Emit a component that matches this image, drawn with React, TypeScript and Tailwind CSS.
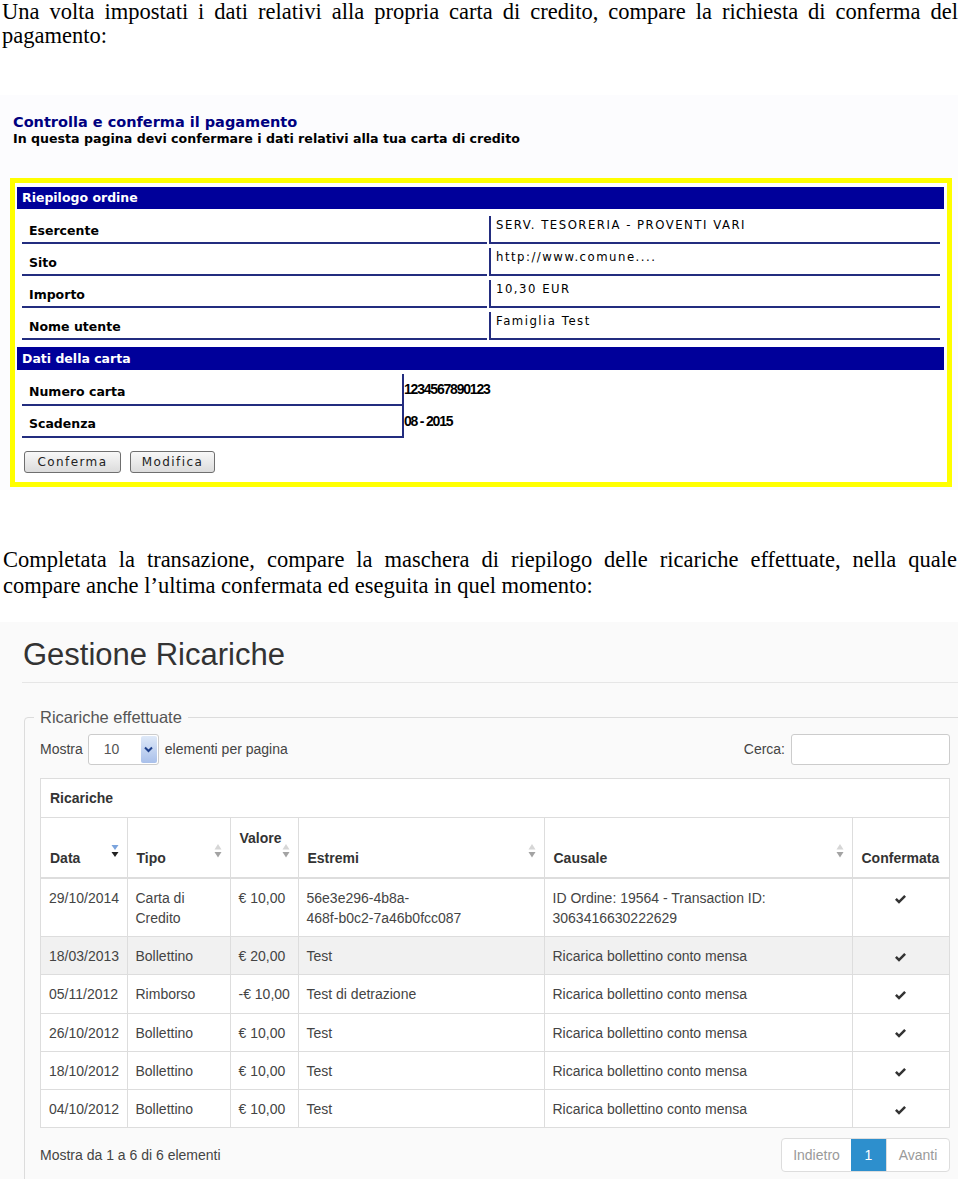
import React from 'react';

const NAVY_LINE = 'border-[#232d7f]';

const SortIcon = ({ active }: { active?: boolean }) => (
  <svg width="8" height="16" viewBox="0 0 8 16" className="absolute right-[8px] top-[25px]">
    {active ? (
      <>
        <path d="M0.5 2 L7.5 2 L4 7 Z" fill="#7aa3dd" />
        <path d="M0.5 9 L7.5 9 L4 14 Z" fill="#222" />
      </>
    ) : (
      <>
        <path d="M4 1 L7.5 6.5 L0.5 6.5 Z" fill="#d6d6d6" />
        <path d="M0.5 9 L7.5 9 L4 14.5 Z" fill="#a3a3a3" />
      </>
    )}
  </svg>
);

const Check = () => (
  <svg width="13" height="11" viewBox="0 0 13 11" className="inline-block">
    <path d="M1 5.8 L2.8 4 L5 6.2 L10.2 1 L12 2.8 L5 9.8 Z" fill="#333" />
  </svg>
);

const orderRows: [string, string][] = [
  ['Esercente', 'SERV. TESORERIA - PROVENTI VARI'],
  ['Sito', 'http://www.comune....'],
  ['Importo', '10,30 EUR'],
  ['Nome utente', 'Famiglia Test'],
];

const cardRows: [string, string][] = [
  ['Numero carta', '1234567890123'],
  ['Scadenza', '08 - 2015'],
];

type Row = {
  data: string;
  tipo: React.ReactNode;
  valore: string;
  estremi: React.ReactNode;
  causale: React.ReactNode;
  hover?: boolean;
};

const rows: Row[] = [
  {
    data: '29/10/2014',
    tipo: 'Carta di Credito',
    valore: '€ 10,00',
    estremi: (
      <>
        56e3e296-4b8a-
        <br />
        468f-b0c2-7a46b0fcc087
      </>
    ),
    causale: (
      <>
        ID Ordine: 19564 - Transaction ID:
        <br />
        3063416630222629
      </>
    ),
  },
  { data: '18/03/2013', tipo: 'Bollettino', valore: '€ 20,00', estremi: 'Test', causale: 'Ricarica bollettino conto mensa', hover: true },
  { data: '05/11/2012', tipo: 'Rimborso', valore: '-€ 10,00', estremi: 'Test di detrazione', causale: 'Ricarica bollettino conto mensa' },
  { data: '26/10/2012', tipo: 'Bollettino', valore: '€ 10,00', estremi: 'Test', causale: 'Ricarica bollettino conto mensa' },
  { data: '18/10/2012', tipo: 'Bollettino', valore: '€ 10,00', estremi: 'Test', causale: 'Ricarica bollettino conto mensa' },
  { data: '04/10/2012', tipo: 'Bollettino', valore: '€ 10,00', estremi: 'Test', causale: 'Ricarica bollettino conto mensa' },
];

export default function App() {
  const td = 'border-l border-[#dddddd] first:border-l-0 px-[8px] pt-[9px] pb-[8.2px] align-top';
  const th = 'relative border-l border-[#dddddd] first:border-l-0 pl-[9px] pr-[20px] pb-[9px] align-bottom text-left font-bold text-[#333] h-[60px]';
  return (
    <div className="w-[960px] bg-white text-black">
      <p className="px-[2px] font-['Liberation_Serif',serif] text-[22.5px] leading-[24px] text-justify">
        Una volta impostati i dati relativi alla propria carta di credito, compare la richiesta di conferma del pagamento:
      </p>

      {/* Screenshot 1 */}
      <div className="mt-[47px] h-[395px] w-[958px] bg-[#fcfcfe] pt-[18px] font-['DejaVu_Sans',sans-serif]">
        <div className="pl-[13px] text-[14.5px] leading-[18px] font-bold text-[#000080]">Controlla e conferma il pagamento</div>
        <div className="pl-[13px] text-[12.6px] leading-[16px] font-bold text-black">
          In questa pagina devi confermare i dati relativi alla tua carta di credito
        </div>
        <div className="mt-[31px] ml-[10px] flex h-[309px] w-[942px] flex-col border-[5px] border-[#ffff00] bg-white pt-[4px] pl-[2px] pr-[3px]">
          <div className="h-[22px] bg-[#00009a] pl-[5px] text-[12.5px] leading-[22px] font-bold text-white">Riepilogo ordine</div>
          <div className="mt-[3px] flex flex-col">
            {orderRows.map(([l, v]) => (
              <div key={l} className="flex h-[32px]">
                <div className={`ml-[5px] flex w-[465px] items-end border-b-2 ${NAVY_LINE} pb-[4px] pl-[7px] text-[12.5px] leading-[14px] font-bold text-black`}>
                  {l}
                </div>
                <div className={`mt-[4px] ml-[2px] w-[451px] border-l-2 border-b-2 ${NAVY_LINE} pt-[2px] pl-[5px] text-[11.7px] leading-[14px] tracking-[1.5px] text-black`}>
                  {v}
                </div>
              </div>
            ))}
          </div>
          <div className="mt-[7px] h-[23px] bg-[#00009a] pl-[5px] text-[12.5px] leading-[23px] font-bold text-white">Dati della carta</div>
          <div className="mt-[4px] flex flex-col">
            {cardRows.map(([l, v]) => (
              <div key={l} className="flex h-[32px]">
                <div className={`ml-[5px] flex w-[382px] items-end border-b-2 border-r-2 ${NAVY_LINE} pb-[5px] pl-[7px] text-[12.5px] leading-[14px] font-bold text-black`}>
                  {l}
                </div>
                <div className="pt-[8px] font-['Liberation_Sans',sans-serif] text-[14px] leading-[15px] font-bold tracking-[-1.2px] text-black">
                  {v}
                </div>
              </div>
            ))}
          </div>
          <div className="mt-[13px] ml-[7px] flex gap-[9px]">
            <button className="h-[22px] w-[97px] rounded-[3px] border border-[#6f6f6f] bg-gradient-to-b from-[#f8f8f8] to-[#dcdcdc] text-[12px] leading-[20px] tracking-[1.4px] text-[#222]">
              Conferma
            </button>
            <button className="h-[22px] w-[85px] rounded-[3px] border border-[#6f6f6f] bg-gradient-to-b from-[#f8f8f8] to-[#dcdcdc] text-[12px] leading-[20px] tracking-[1.4px] text-[#222]">
              Modifica
            </button>
          </div>
        </div>
      </div>

      <p className="mt-[57px] px-[3px] font-['Liberation_Serif',serif] text-[22.5px] leading-[26px] text-justify">
        Completata la transazione, compare la maschera di riepilogo delle ricariche effettuate, nella quale compare anche l’ultima
        confermata ed eseguita in quel momento:
      </p>

      {/* Screenshot 2 */}
      <div className="mt-[23px] h-[557px] w-[958px] overflow-hidden bg-[#fafafa] font-['Liberation_Sans',Arial,sans-serif] text-[#333]">
        <div className="pt-[15px] pl-[23px] text-[31px] leading-[36px] text-[#333]">Gestione Ricariche</div>
        <div className="mt-[9px] ml-[22px] h-px bg-[#e6e6e6]" />
        <fieldset className="mt-[24px] ml-[24px] w-[990px] rounded-tl-[4px] border border-[#dcdcdc] pl-[9px]">
          <legend className="px-[6px] text-[16.5px] leading-[20px] text-[#555]">Ricariche effettuate</legend>
          <div className="ml-[6px] w-[910px] pt-[7px] pb-[40px]">
            <div className="flex h-[31px] items-center justify-between text-[14px] text-[#444]">
              <div className="flex items-center">
                <span>Mostra</span>
                <div className="ml-[5px] flex h-[31px] w-[71px] items-center rounded-[3px] border border-[#cccccc] bg-white">
                  <span className="flex-1 pl-[15px] text-[#555]">10</span>
                  <div className="mr-[1px] flex h-[27px] w-[16px] items-center justify-center rounded-[2px] bg-gradient-to-b from-[#dfe9f8] to-[#a9c0ea]">
                    <svg width="9" height="7" viewBox="0 0 9 7">
                      <path d="M1 1.5 L4.5 5 L8 1.5" stroke="#1d3f8a" strokeWidth="2" fill="none" />
                    </svg>
                  </div>
                </div>
                <span className="ml-[6px]">elementi per pagina</span>
              </div>
              <div className="flex items-center">
                <span>Cerca:</span>
                <div className="ml-[6px] h-[31px] w-[159px] rounded-[3px] border border-[#cccccc] bg-white" />
              </div>
            </div>

            <div className="mt-[13px] border border-[#dddddd] bg-white">
              <div className="h-[39px] border-b border-[#dddddd] pl-[9px] text-[14px] leading-[39px] font-bold text-[#333]">Ricariche</div>
              <table className="w-full table-fixed border-collapse text-[14px] leading-[20px] text-[#444]">
                <colgroup>
                  <col className="w-[86px]" />
                  <col className="w-[103px]" />
                  <col className="w-[68px]" />
                  <col className="w-[246px]" />
                  <col className="w-[308px]" />
                  <col className="w-[97px]" />
                </colgroup>
                <thead>
                  <tr className="border-b-2 border-[#dddddd]">
                    <th className={th}>
                      Data
                      <SortIcon active />
                    </th>
                    <th className={th}>
                      Tipo
                      <SortIcon />
                    </th>
                    <th className={th}>
                      Valore
                      <br />
                      &nbsp;
                      <SortIcon />
                    </th>
                    <th className={th}>
                      Estremi
                      <SortIcon />
                    </th>
                    <th className={th}>
                      Causale
                      <SortIcon />
                    </th>
                    <th className="border-l border-[#dddddd] pb-[9px] pl-[9px] align-bottom text-left font-bold text-[#333]">Confermata</th>
                  </tr>
                </thead>
                <tbody>
                  {rows.map((r, i) => (
                    <tr key={i} className={`border-t border-[#dddddd] first:border-t-0 ${r.hover ? 'bg-[#f1f1f1]' : ''}`}>
                      <td className={td}>{r.data}</td>
                      <td className={td}>{r.tipo}</td>
                      <td className={`${td} whitespace-nowrap`}>{r.valore}</td>
                      <td className={td}>{r.estremi}</td>
                      <td className={td}>{r.causale}</td>
                      <td className={`${td} text-center`}>
                        <Check />
                      </td>
                    </tr>
                  ))}
                </tbody>
              </table>
            </div>

            <div className="mt-[10px] flex items-center justify-between text-[14px] text-[#444]">
              <span>Mostra da 1 a 6 di 6 elementi</span>
              <div className="flex h-[34px] overflow-hidden rounded-[4px] border border-[#dddddd] bg-white text-[14px] leading-[32px]">
                <div className="w-[69px] text-center text-[#9a9a9a]">Indietro</div>
                <div className="w-[35px] bg-[#2d8fcd] text-center text-white">1</div>
                <div className="w-[63px] border-l border-[#dddddd] text-center text-[#9a9a9a]">Avanti</div>
              </div>
            </div>
          </div>
        </fieldset>
      </div>
    </div>
  );
}
